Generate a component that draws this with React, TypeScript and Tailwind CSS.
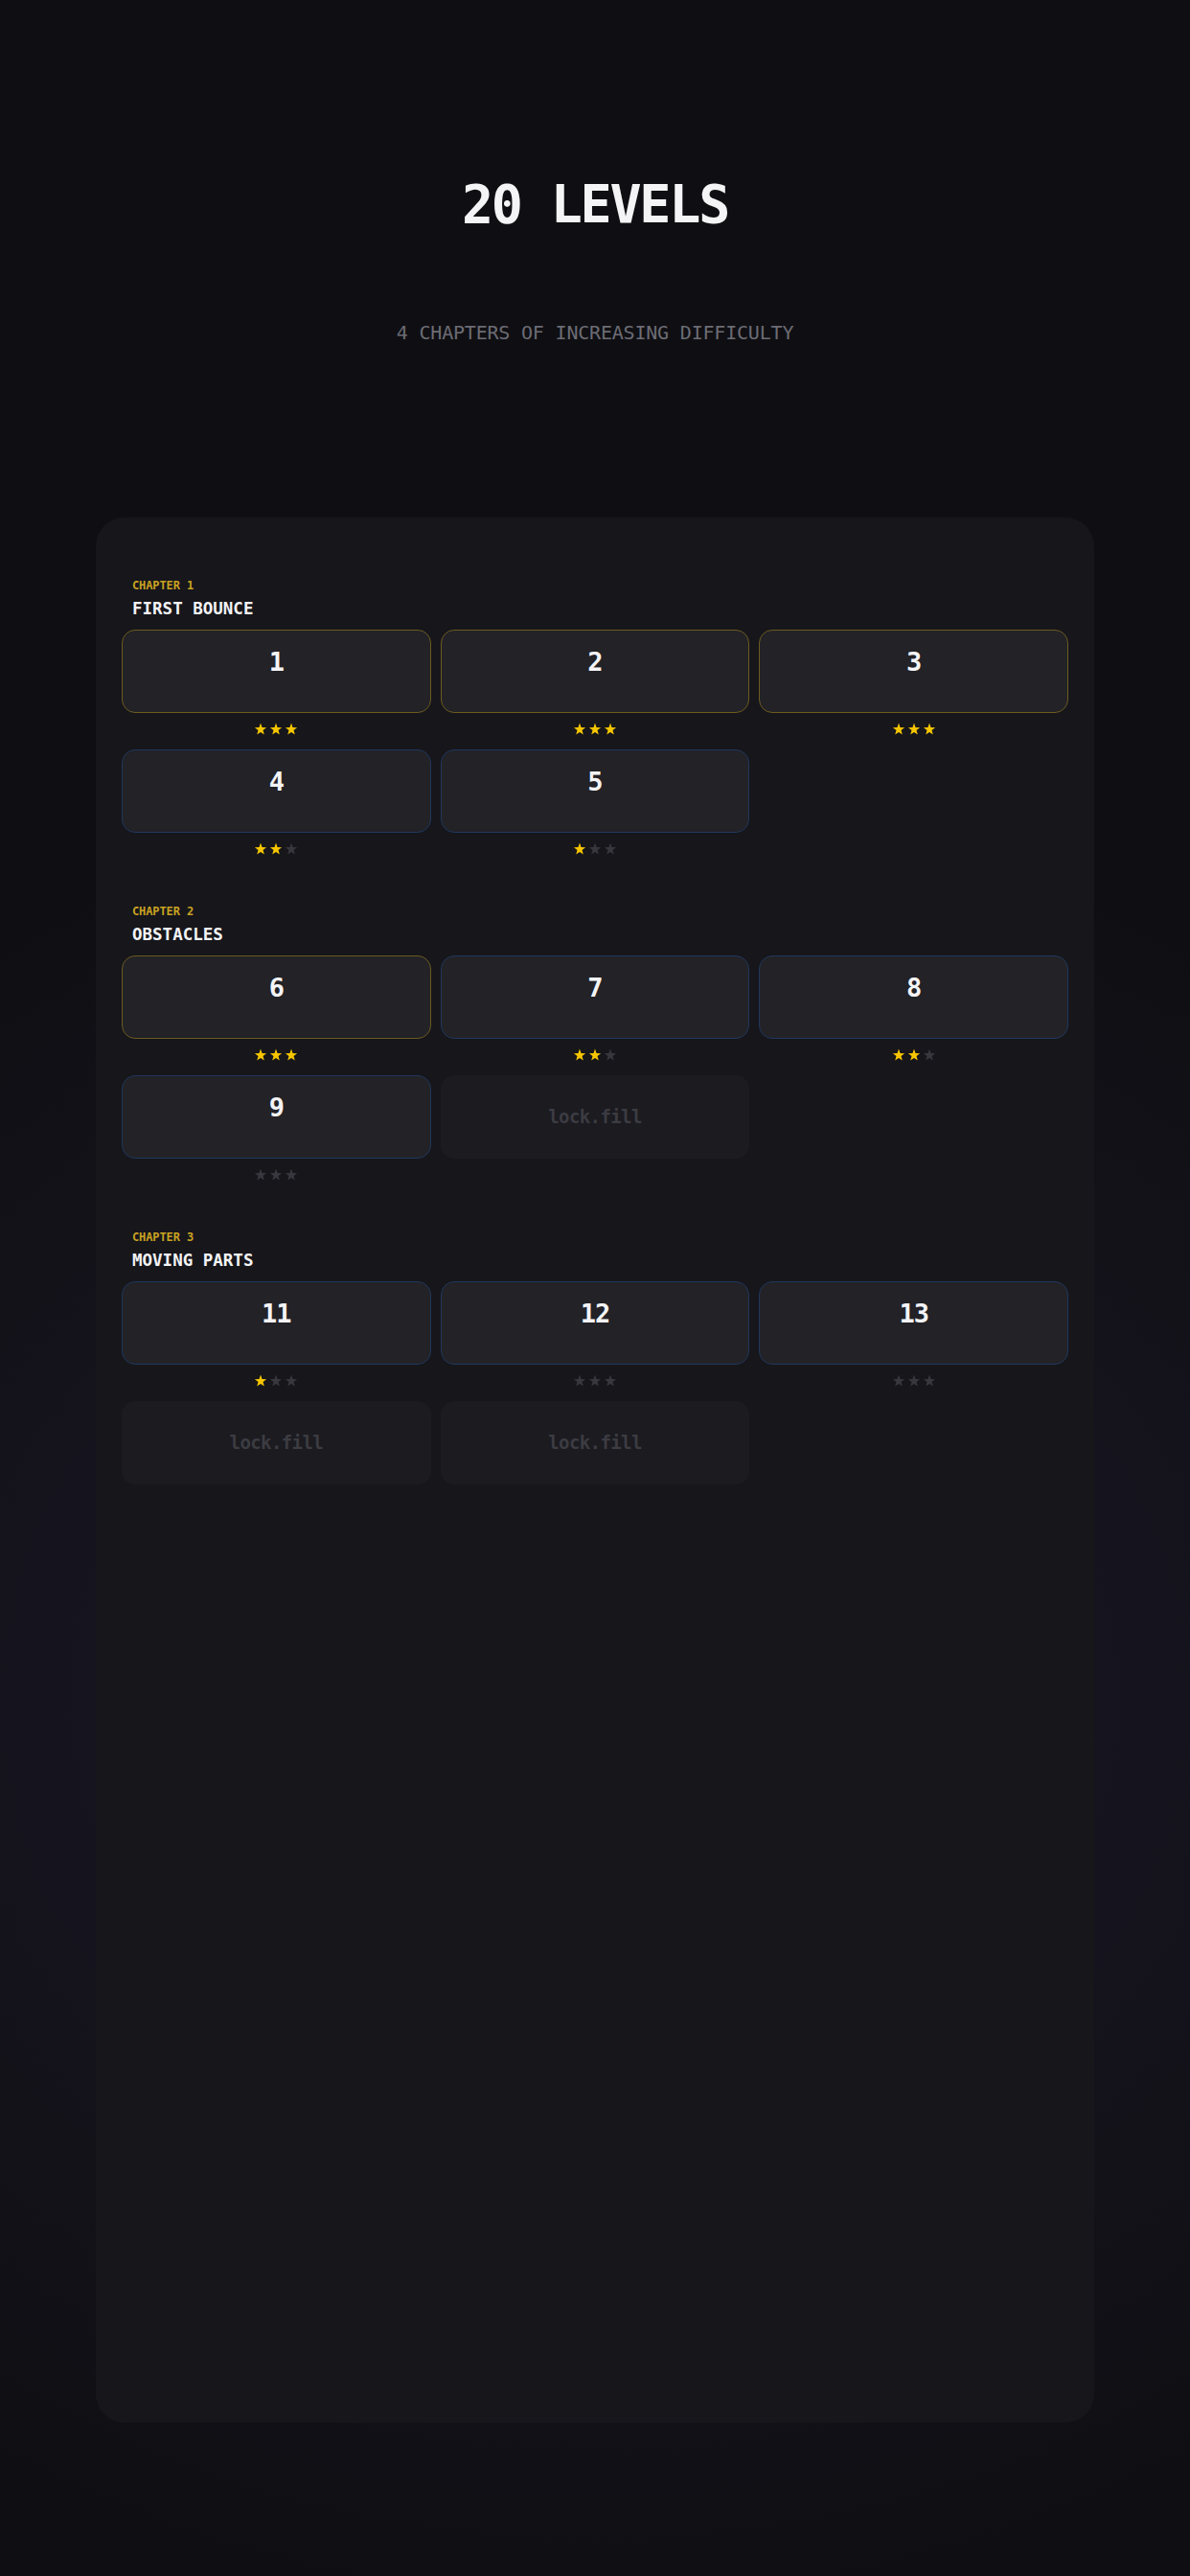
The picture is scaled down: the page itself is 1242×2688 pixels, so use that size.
import React from "react";

type Level = { id: number; stars: number; locked?: boolean };
type Chapter = { num: number; title: string; levels: Level[] };

const chapters: Chapter[] = [
  {
    num: 1,
    title: "FIRST BOUNCE",
    levels: [
      { id: 1, stars: 3 },
      { id: 2, stars: 3 },
      { id: 3, stars: 3 },
      { id: 4, stars: 2 },
      { id: 5, stars: 1 },
    ],
  },
  {
    num: 2,
    title: "OBSTACLES",
    levels: [
      { id: 6, stars: 3 },
      { id: 7, stars: 2 },
      { id: 8, stars: 2 },
      { id: 9, stars: 0 },
      { id: 10, stars: 0, locked: true },
    ],
  },
  {
    num: 3,
    title: "MOVING PARTS",
    levels: [
      { id: 11, stars: 1 },
      { id: 12, stars: 0 },
      { id: 13, stars: 0 },
      { id: 14, stars: 0, locked: true },
      { id: 15, stars: 0, locked: true },
    ],
  },
];

const mono = "font-['DejaVu_Sans_Mono','Liberation_Mono',monospace]";

function Star({ on }: { on: boolean }) {
  return (
    <svg width="14" height="14" viewBox="0 0 24 24" className={on ? "text-[#f7c600]" : "text-[#37373d]"}>
      <path
        fill="currentColor"
        d="M12 1l2.6 7.6 7.9.3-6.2 4.9 2.2 7.7L12 17.1l-6.5 4.4 2.2-7.7-6.2-4.9 7.9-.3z"
      />
    </svg>
  );
}

function LevelCell({ level }: { level: Level }) {
  if (level.locked) {
    return (
      <div className="h-[87px] rounded-[14px] bg-[#1b1b20] flex items-center justify-center">
        <span className={`${mono} text-[19px] font-bold tracking-[-0.6px] text-[#3c3c42]`}>lock.fill</span>
      </div>
    );
  }

  const perfect = level.stars === 3;

  return (
    <div className="flex flex-col gap-[10px]">
      <div
        className={`h-[87px] rounded-[14px] bg-[#222227] border-[1.5px] flex flex-col items-center pt-[17px] ${
          perfect ? "border-[#6d5b1f]" : "border-[#20375c]"
        }`}
      >
        <span className={`${mono} text-[27px] leading-[32px] font-bold tracking-[-1px] text-[#f4f4f6]`}>
          {level.id}
        </span>
      </div>
      <div className="h-[14px] flex items-center justify-center gap-[2px]">
        {[0, 1, 2].map((i) => (
          <Star key={i} on={i < level.stars} />
        ))}
      </div>
    </div>
  );
}

function ChapterSection({ chapter }: { chapter: Chapter }) {
  return (
    <section className="flex flex-col">
      <div className="px-[11px] flex flex-col gap-[4px]">
        <p className={`${mono} text-[12px] leading-[16px] font-bold tracking-[-0.1px] text-[#c9a222]`}>
          CHAPTER {chapter.num}
        </p>
        <h2 className={`${mono} text-[17.5px] leading-[24px] font-bold text-[#f4f4f6]`}>{chapter.title}</h2>
      </div>
      <div className="mt-[10px] grid grid-cols-3 gap-x-[10px] gap-y-[14px]">
        {chapter.levels.map((l) => (
          <LevelCell key={l.id} level={l} />
        ))}
      </div>
    </section>
  );
}

export default function App() {
  return (
    <div className="min-h-screen w-full bg-[radial-gradient(ellipse_90%_35%_at_50%_66%,#1b172b_0%,#131219_70%,#0f0f13_100%)] pb-[161px]">
      <header className="flex flex-col items-center pt-[186px]">
        <h1 className={`${mono} text-[55px] leading-none font-bold tracking-[-2.2px] text-[#f4f4f6]`}>20 LEVELS</h1>
        <p className={`${mono} mt-[96px] text-[20px] leading-none tracking-[-0.2px] text-[#6c6c74]`}>
          4 CHAPTERS OF INCREASING DIFFICULTY
        </p>
      </header>

      <main className="mx-[100px] mt-[183px] h-[1988px] rounded-[30px] bg-[#16161b] px-[27px] pt-[63px] flex flex-col gap-[50px]">
        {chapters.map((c) => (
          <ChapterSection key={c.num} chapter={c} />
        ))}
      </main>
    </div>
  );
}
